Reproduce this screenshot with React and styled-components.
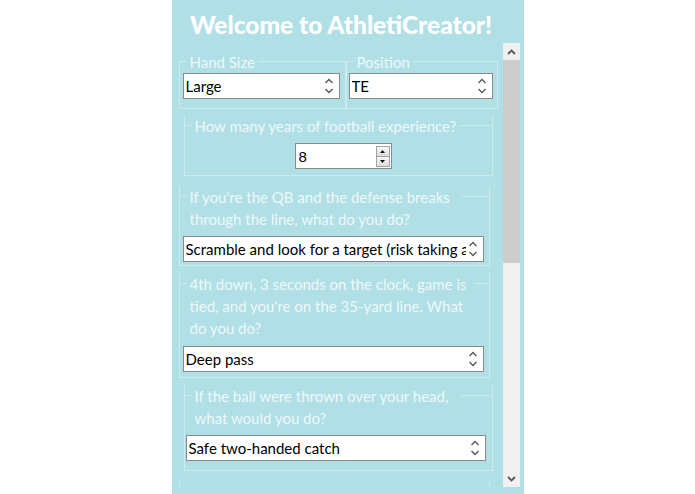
import React from "react";
import styled, { createGlobalStyle } from "styled-components";

const GlobalStyle = createGlobalStyle`
  html, body {
    margin: 0;
    padding: 0;
    background: #fff;
    overflow: hidden;
  }
  body {
    font-family: "Lato", "Open Sans", sans-serif;
  }
`;

const Panel = styled.div`
  width: 352px;
  height: 494px;
  margin: 0 auto;
  background: #b0e0e6;
  display: flex;
  flex-direction: column;
`;

const Title = styled.h1`
  margin: 0;
  height: 43px;
  box-sizing: border-box;
  padding: 11px 13px 0 0;
  text-align: center;
  font: 900 24.5px/28px "Lato", sans-serif;
  color: #fff;
  white-space: nowrap;
`;

const ScrollFrame = styled.div`
  display: flex;
  height: 444px;
  padding-right: 4px;
`;

const Content = styled.div`
  flex: 1;
  min-width: 0;
  overflow: hidden;
`;

const Row = styled.div`
  display: flex;
  margin: 18px 5px 0 7px;
`;

const Group = styled.div`
  flex: ${(p) => p.$flex || "none"};
  min-width: 0;
  margin: ${(p) => (p.$inRow ? "0" : `${p.$top}px ${p.$right}px 0 ${p.$left}px`)};
  border: 1px solid #ccebef;
  border-top: none;
`;

const Head = styled.div`
  display: flex;
  align-items: flex-start;
  margin: -10px -1px 0;
`;

const Line = styled.div`
  flex: ${(p) => (p.$grow ? "1" : "0 0 8px")};
  margin-top: 10px;
  border-top: 1px solid #ccebef;
`;

const Legend = styled.div`
  padding: 0 ${(p) => p.$tail || 3}px 0 3px;
  font: 15px/22px "Lato", sans-serif;
  color: rgba(255, 255, 255, 0.8);
  white-space: nowrap;
`;

const Body = styled.div`
  display: flex;
  justify-content: ${(p) => (p.$center ? "center" : "stretch")};
  padding: ${(p) => p.$pad};
`;

const Select = styled.div`
  flex: 1;
  min-width: 0;
  display: flex;
  align-items: center;
  height: 26px;
  box-sizing: border-box;
  border: 1px solid #8a8a8a;
  background: #fff;
  padding: 0 5px 0 2px;
  font: 15px "Lato", sans-serif;
  color: #000;
`;

const SelectText = styled.span`
  flex: 1;
  min-width: 0;
  overflow: hidden;
  white-space: nowrap;
  margin-right: 2px;
`;

const NumberBox = styled.div`
  width: 97px;
  height: 26px;
  box-sizing: border-box;
  border: 1px solid #8a8a8a;
  background: #fff;
  display: flex;
  align-items: center;
  padding: 0 1px 0 3px;
  font: 15px "Liberation Sans", Arial, sans-serif;
  color: #000;
`;

const NumberText = styled.span`
  flex: 1;
`;

const SpinCol = styled.div`
  display: flex;
  flex-direction: column;
  width: 14px;
`;

const SpinBtn = styled.div`
  height: 11px;
  box-sizing: border-box;
  border: 1px solid #a3a3a3;
  margin-top: ${(p) => (p.$down ? "-1px" : "0")};
  background: linear-gradient(#f8f8f8, #dedede);
  display: flex;
  align-items: center;
  justify-content: center;
`;

const ScrollBar = styled.div`
  width: 17px;
  display: flex;
  flex-direction: column;
  background: #f0f0f0;
`;

const ScrollButton = styled.div`
  height: 17px;
  display: flex;
  align-items: center;
  justify-content: center;
`;

const Track = styled.div`
  flex: 1;
`;

const Thumb = styled.div`
  height: 203px;
  background: #cdcdcd;
`;

function SelectArrows() {
  return (
    <svg width="10" height="20" viewBox="0 0 10 20">
      <path d="M1.5 7 L5 3.5 L8.5 7" fill="none" stroke="#555" strokeWidth="1.3" />
      <path d="M1.5 13 L5 16.5 L8.5 13" fill="none" stroke="#555" strokeWidth="1.3" />
    </svg>
  );
}

function Chevron({ down }) {
  return (
    <svg width="9" height="6" viewBox="0 0 9 6">
      <path
        d={down ? "M1 1 L4.5 4.5 L8 1" : "M1 5 L4.5 1.5 L8 5"}
        fill="none"
        stroke="#555"
        strokeWidth="1.8"
      />
    </svg>
  );
}

function Tri({ down }) {
  return (
    <svg width="5" height="3" viewBox="0 0 5 3">
      <path d={down ? "M0 0 H5 L2.5 3 Z" : "M0 3 H5 L2.5 0 Z"} fill="#111" />
    </svg>
  );
}

function Field({ legend, tail, children, pad, center, ...rest }) {
  return (
    <Group {...rest}>
      <Head>
        <Line />
        <Legend $tail={tail}>{legend}</Legend>
        <Line $grow />
      </Head>
      <Body $pad={pad} $center={center}>
        {children}
      </Body>
    </Group>
  );
}

function Dropdown({ value }) {
  return (
    <Select>
      <SelectText>{value}</SelectText>
      <SelectArrows />
    </Select>
  );
}

export default function App() {
  return (
    <>
      <GlobalStyle />
      <Panel>
        <Title>Welcome to AthletiCreator!</Title>
        <ScrollFrame>
          <Content>
            <Row>
              <Field $inRow $flex="0 0 165px" legend="Hand Size" pad="0 5px 9px 3px">
                <Dropdown value="Large" />
              </Field>
              <Field $inRow $flex="1" legend="Position" pad="0 4px 9px 2px">
                <Dropdown value="TE" />
              </Field>
            </Row>

            <Field
              $top={16}
              $left={12}
              $right={10}
              legend="How many years of football experience?"
              pad="6px 0 6px 10px"
              center
            >
              <NumberBox>
                <NumberText>8</NumberText>
                <SpinCol>
                  <SpinBtn>
                    <Tri />
                  </SpinBtn>
                  <SpinBtn $down>
                    <Tri down />
                  </SpinBtn>
                </SpinCol>
              </NumberBox>
            </Field>

            <Field
              $top={20}
              $left={7}
              $right={13}
              tail={12}
              legend={
                <>
                  If you're the QB and the defense breaks
                  <br />
                  through the line, what do you do?
                </>
              }
              pad="6px 5px 3px 3px"
            >
              <Dropdown value="Scramble and look for a target (risk taking a sack)" />
            </Field>

            <Field
              $top={17}
              $left={7}
              $right={13}
              tail={8}
              legend={
                <>
                  4th down, 3 seconds on the clock, game is
                  <br />
                  tied, and you're on the 35-yard line. What
                  <br />
                  do you do?
                </>
              }
              pad="7px 5px 5px 3px"
            >
              <Dropdown value="Deep pass" />
            </Field>

            <Field
              $top={17}
              $left={12}
              $right={10}
              tail={12}
              legend={
                <>
                  If the ball were thrown over your head,
                  <br />
                  what would you do?
                </>
              }
              pad="6px 6px 9px 1px"
            >
              <Dropdown value="Safe two-handed catch" />
            </Field>

            <Field
              $top={20}
              $left={7}
              $right={13}
              legend={
                <>
                  Are you more comfortable blocking or
                  <br />
                  running routes?
                </>
              }
              pad="6px 5px 3px 3px"
            >
              <Dropdown value="Running routes" />
            </Field>
          </Content>
          <ScrollBar>
            <ScrollButton>
              <Chevron />
            </ScrollButton>
            <Track>
              <Thumb />
            </Track>
            <ScrollButton>
              <Chevron down />
            </ScrollButton>
          </ScrollBar>
        </ScrollFrame>
      </Panel>
    </>
  );
}
